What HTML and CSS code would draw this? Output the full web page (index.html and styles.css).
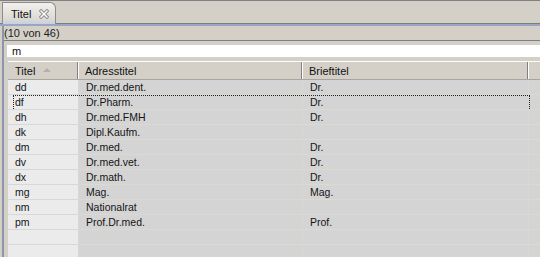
FILE: index.html
```html
<!DOCTYPE html>
<html lang="de">
<head>
  <meta charset="UTF-8">
  <title>Titel</title>
  <link rel="stylesheet" href="styles.css">
</head>
<body>
  <div class="view">
    <div class="tabbar">
      <div class="tab">
        <span class="tab-label">Titel</span>
        <svg class="tab-close" width="10" height="10" viewBox="0 0 10 10">
          <path d="M2 2 L8 8 M8 2 L2 8" stroke="#8a8a8a" stroke-width="3.2" stroke-linecap="square"/>
          <path d="M2 2 L8 8 M8 2 L2 8" stroke="#ffffff" stroke-width="1.4" stroke-linecap="square"/>
        </svg>
      </div>
    </div>

    <div class="panel">
      <div class="status">(10 von 46)</div>
      <div class="content">
        <input class="filter" type="text" value="m">

        <div class="table">
          <div class="row head">
            <div class="hcell">Titel <span class="sort"></span></div>
            <div class="hcell">Adresstitel</div>
            <div class="hcell">Brieftitel</div>
            <div class="hcell"></div>
          </div>

          <div class="row"><div class="cell key">dd</div><div class="cell">Dr.med.dent.</div><div class="cell">Dr.</div><div class="cell"></div></div>
          <div class="row focus"><div class="cell key">df</div><div class="cell">Dr.Pharm.</div><div class="cell">Dr.</div><div class="cell"></div></div>
          <div class="row"><div class="cell key">dh</div><div class="cell">Dr.med.FMH</div><div class="cell">Dr.</div><div class="cell"></div></div>
          <div class="row"><div class="cell key">dk</div><div class="cell">Dipl.Kaufm.</div><div class="cell"></div><div class="cell"></div></div>
          <div class="row"><div class="cell key">dm</div><div class="cell">Dr.med.</div><div class="cell">Dr.</div><div class="cell"></div></div>
          <div class="row"><div class="cell key">dv</div><div class="cell">Dr.med.vet.</div><div class="cell">Dr.</div><div class="cell"></div></div>
          <div class="row"><div class="cell key">dx</div><div class="cell">Dr.math.</div><div class="cell">Dr.</div><div class="cell"></div></div>
          <div class="row"><div class="cell key">mg</div><div class="cell">Mag.</div><div class="cell">Mag.</div><div class="cell"></div></div>
          <div class="row"><div class="cell key">nm</div><div class="cell">Nationalrat</div><div class="cell"></div><div class="cell"></div></div>
          <div class="row"><div class="cell key">pm</div><div class="cell">Prof.Dr.med.</div><div class="cell">Prof.</div><div class="cell"></div></div>
          <div class="row"><div class="cell key"></div><div class="cell"></div><div class="cell"></div><div class="cell"></div></div>
          <div class="row"><div class="cell key"></div><div class="cell"></div><div class="cell"></div><div class="cell"></div></div>
        </div>
      </div>
    </div>
  </div>
</body>
</html>
```

FILE: styles.css
```css
* { margin: 0; padding: 0; box-sizing: border-box; }
body {
  font-family: "Liberation Sans", Arial, sans-serif;
  font-size: 11px;
  color: #1c1c1c;
  background-color: #d4d0c8;
  width: 540px;
  height: 257px;
  overflow: hidden;
}
.view {
  display: flex;
  flex-direction: column;
  height: 100%;
}

/* tab strip */
.tabbar {
  display: flex;
  align-items: flex-end;
  height: 26px;
  padding-left: 2px;
  border-top: 1px solid #808080;
  border-bottom: 2px solid #98a5c3;
  box-shadow: inset 0 -1px 0 #7c7c7c;
}
.tab {
  display: flex;
  align-items: center;
  gap: 8px;
  width: 54px;
  height: 22px;
  padding: 0 0 0 8px;
  border: 1px solid #8c8c8c;
  border-bottom: none;
  border-radius: 0 6px 0 0;
  background: linear-gradient(#f1f0ec, #dedcd6 70%, #c9cfdd);
}
.tab-label { font-size: 11px; color: #111; }
.tab-close { display: block; }

/* panel below the tabs */
.panel {
  flex: 1;
  display: flex;
  flex-direction: column;
  margin-left: 2px;
  border-left: 2px solid #8b95ab;
  min-height: 0;
}
.status {
  height: 15px;
  line-height: 14px;
  border-bottom: 1px solid #7f7f7f;
}
.content {
  flex: 1;
  display: flex;
  flex-direction: column;
  padding-top: 4px;
  min-height: 0;
}
.filter {
  height: 14px;
  margin-left: 3px;
  padding-left: 5px;
  border: none;
  outline: none;
  background-color: #fff;
  font-family: "Liberation Sans", Arial, sans-serif;
  font-size: 11px;
  color: #111;
}

/* table */
.table {
  margin-top: 4px;
  margin-left: 4px;
}
.row {
  display: grid;
  grid-template-columns: 70px 224px 226px 1fr;
  height: 15px;
  position: relative;
}
.row.head {
  height: 19px;
  border-top: 1px solid #ffffff;
  border-bottom: 1px solid #a8a59e;
}
.hcell {
  display: flex;
  align-items: center;
  gap: 8px;
  padding-left: 7px;
  border-right: 1px solid #808080;
  box-shadow: inset 1px 0 0 #ffffff;
  color: #111;
}
.hcell:first-child { box-shadow: none; }
.hcell:last-child { border-right: none; }
.sort {
  width: 0;
  height: 0;
  border-left: 4px solid transparent;
  border-right: 4px solid transparent;
  border-bottom: 4px solid #b3b1ab;
  margin-top: -1px;
}
.cell {
  line-height: 15px;
  padding-left: 7px;
  font-size: 10.5px;
  color: #151515;
  background-color: #d4d4d4;
  border-bottom: 1px solid #dcd9d1;
  border-left: 1px solid #dad8d2;
  white-space: nowrap;
  overflow: hidden;
}
.cell.key {
  background-color: #ebebeb;
  border-bottom-color: #d8d8d8;
  border-left: none;
}
.row.focus::after {
  content: "";
  position: absolute;
  left: 5px;
  top: 0;
  width: 515px;
  height: 14px;
  border: 1px dotted #222;
}
```
